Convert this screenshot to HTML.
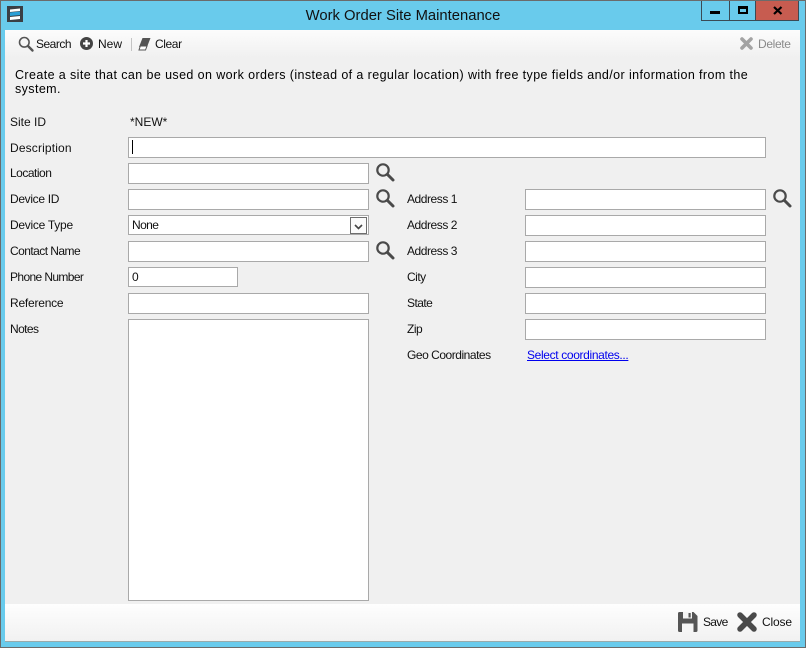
<!DOCTYPE html>
<html><head><meta charset="utf-8"><style>
html,body{margin:0;padding:0}
body{width:806px;height:648px;position:relative;overflow:hidden;background:#69cbec;font-family:"Liberation Sans",sans-serif;font-size:12px;color:#111}
#frame{position:absolute;left:0;top:0;width:804px;height:646px;border:1px solid #6b6b6b}
.a{position:absolute;white-space:nowrap;line-height:14px}
.i{position:absolute;box-sizing:border-box;background:#fff;border:1px solid #a9a9a9}
svg{position:absolute;overflow:visible}
</style></head><body>
<div id="frame"></div>
<div class="a" style="left:0;width:806px;top:8px;text-align:center;font-size:14.800px;line-height:16px;color:#111">Work Order Site Maintenance</div>
<div style="position:absolute;left:7px;top:6px;width:16px;height:16px;background:#3a3f45"></div>
<svg style="left:7px;top:6px" width="16" height="16"><path d="M3 3.500L13 2.500V5L3 6Z" fill="#fff"/><path d="M3 6.500L13 5.500V9L3 10Z" fill="#2a9fd6"/><path d="M3 11L13 10V13L3 14Z" fill="#fff"/></svg>
<div style="position:absolute;left:701px;top:1px;width:96px;height:19px;background:#c75c50;border:1px solid #3a4a55;border-top:0"></div>
<div style="position:absolute;left:702px;top:1px;width:53px;height:19px;background:#69cbec"></div>
<div style="position:absolute;left:729px;top:1px;width:1px;height:19px;background:#3a4a55"></div>
<div style="position:absolute;left:755px;top:1px;width:1px;height:19px;background:#3a4a55"></div>
<div style="position:absolute;left:710px;top:11px;width:10px;height:3px;background:#000"></div>
<div style="position:absolute;left:738px;top:6px;width:10px;height:8px;box-sizing:border-box;border:2px solid #000;border-top-width:3px"></div>
<svg style="left:773px;top:6px" width="10" height="9"><path d="M1 1L8.500 8M8.500 1L1 8" stroke="#000" stroke-width="2.200" fill="none"/></svg>

<div style="position:absolute;left:5px;top:30px;width:795px;height:611px;background:#f0f0f0;border-bottom:1px solid #9aa"></div>
<div style="position:absolute;left:5px;top:30px;width:795px;height:28px;background:linear-gradient(#fcfcfc,#f0f0f0)"></div>
<div style="position:absolute;left:5px;top:604px;width:795px;height:37px;background:linear-gradient(#fefefe,#f1f1f1)"></div>

<svg style="left:18px;top:36px" width="16" height="16"><circle cx="6.300" cy="6.300" r="4.800" fill="none" stroke="#555" stroke-width="1.600"/><path d="M10 10L14.500 14.500" stroke="#555" stroke-width="2.400" stroke-linecap="round"/></svg>
<div class="a" style="left:36px;top:37px;letter-spacing:-.5px">Search</div>
<svg style="left:80px;top:37px" width="14" height="14"><circle cx="6.500" cy="6.500" r="6.500" fill="#444"/><path d="M6.500 3V10M3 6.500H10" stroke="#fff" stroke-width="2.200"/></svg>
<div class="a" style="left:98px;top:37px">New</div>
<div style="position:absolute;left:131px;top:38px;width:1px;height:13px;background:#c4c4c4"></div>
<svg style="left:138px;top:37px" width="13" height="14"><path d="M4.500 1H12.500L9 10H1Z" fill="#555"/><path d="M2.300 9L1 13H7.500L9 9Z" fill="#fff" stroke="#555"/></svg>
<div class="a" style="left:155px;top:37px;letter-spacing:-.4px">Clear</div>
<svg style="left:740px;top:37px" width="13" height="13"><path d="M2 2L11 11M11 2L2 11" stroke="#a3a3a3" stroke-width="3.600" stroke-linecap="round"/></svg>
<div class="a" style="left:758px;top:37px;color:#8a8a8a;letter-spacing:-.35px">Delete</div>

<div class="a" style="left:15px;top:68px;font-size:12.500px;letter-spacing:.4px;color:#000">Create a site that can be used on work orders (instead of a regular location) with free type fields and/or information from the</div>
<div class="a" style="left:15px;top:82px;font-size:12.500px;letter-spacing:.4px;color:#000">system.</div>

<div class="a" style="left:10px;top:115px">Site ID</div>
<div class="a" style="left:130px;top:115px">*NEW*</div>
<div class="a" style="left:10px;top:141px;letter-spacing:.15px">Description</div>
<div class="a" style="left:10px;top:166px;letter-spacing:-.5px">Location</div>
<div class="a" style="left:10px;top:192px;letter-spacing:-.33px">Device ID</div>
<div class="a" style="left:10px;top:218px;letter-spacing:-.27px">Device Type</div>
<div class="a" style="left:10px;top:244px;letter-spacing:-.55px">Contact Name</div>
<div class="a" style="left:10px;top:270px;letter-spacing:-.62px">Phone Number</div>
<div class="a" style="left:10px;top:296px;letter-spacing:-.22px">Reference</div>
<div class="a" style="left:10px;top:322px;letter-spacing:-.6px">Notes</div>

<div class="i" style="left:128px;top:137px;width:638px;height:21px"></div>
<div style="position:absolute;left:132px;top:140px;width:1px;height:14px;background:#000"></div>
<div class="i" style="left:128px;top:163px;width:241px;height:21px"></div>
<div class="i" style="left:128px;top:189px;width:241px;height:21px"></div>
<div class="i" style="left:128px;top:215px;width:241px;height:20px"></div>
<div class="a" style="left:132px;top:218px;letter-spacing:-.6px">None</div>
<div style="position:absolute;left:350px;top:217px;width:17px;height:17px;box-sizing:border-box;border:1px solid #6e6e6e;background:#fbfbfb"></div>
<svg style="left:354px;top:224px" width="9" height="6"><path d="M1 1L4.500 4.500L8 1" fill="none" stroke="#444" stroke-width="1.600"/></svg>
<div class="i" style="left:128px;top:241px;width:241px;height:21px"></div>
<div class="i" style="left:128px;top:267px;width:110px;height:20px"></div>
<div class="a" style="left:132px;top:270px">0</div>
<div class="i" style="left:128px;top:293px;width:241px;height:21px"></div>
<div class="i" style="left:128px;top:319px;width:241px;height:282px"></div>

<svg style="left:376px;top:163px" width="19" height="19"><circle cx="7" cy="7" r="5.700" fill="none" stroke="#4a4a4a" stroke-width="2.200"/><path d="M11.500 11.500L17 17" stroke="#4a4a4a" stroke-width="3" stroke-linecap="round"/></svg>
<svg style="left:376px;top:189px" width="19" height="19"><circle cx="7" cy="7" r="5.700" fill="none" stroke="#4a4a4a" stroke-width="2.200"/><path d="M11.500 11.500L17 17" stroke="#4a4a4a" stroke-width="3" stroke-linecap="round"/></svg>
<svg style="left:376px;top:241px" width="19" height="19"><circle cx="7" cy="7" r="5.700" fill="none" stroke="#4a4a4a" stroke-width="2.200"/><path d="M11.500 11.500L17 17" stroke="#4a4a4a" stroke-width="3" stroke-linecap="round"/></svg>
<svg style="left:773px;top:189px" width="19" height="19"><circle cx="7" cy="7" r="5.700" fill="none" stroke="#4a4a4a" stroke-width="2.200"/><path d="M11.500 11.500L17 17" stroke="#4a4a4a" stroke-width="3" stroke-linecap="round"/></svg>

<div class="a" style="left:407px;top:192px;letter-spacing:-.45px">Address 1</div>
<div class="a" style="left:407px;top:218px;letter-spacing:-.45px">Address 2</div>
<div class="a" style="left:407px;top:244px;letter-spacing:-.45px">Address 3</div>
<div class="a" style="left:407px;top:270px;letter-spacing:-.5px">City</div>
<div class="a" style="left:407px;top:296px;letter-spacing:-.55px">State</div>
<div class="a" style="left:407px;top:322px;letter-spacing:-.5px">Zip</div>
<div class="a" style="left:407px;top:348px;letter-spacing:-.47px">Geo Coordinates</div>
<div class="a" style="left:527px;top:348px;color:#0000ee;text-decoration:underline;letter-spacing:-.35px">Select coordinates...</div>

<div class="i" style="left:525px;top:189px;width:241px;height:21px"></div>
<div class="i" style="left:525px;top:215px;width:241px;height:21px"></div>
<div class="i" style="left:525px;top:241px;width:241px;height:21px"></div>
<div class="i" style="left:525px;top:267px;width:241px;height:21px"></div>
<div class="i" style="left:525px;top:293px;width:241px;height:21px"></div>
<div class="i" style="left:525px;top:319px;width:241px;height:21px"></div>

<svg style="left:678px;top:612px" width="20" height="20"><path d="M0 1.500Q0 0 1.500 0H15.500L19.500 4V18.500Q19.500 20 18 20H1.500Q0 20 0 18.500Z" fill="#555"/><rect x="5" y="0" width="9" height="6.500" fill="#f5f5f5"/><rect x="10.500" y="1" width="2.200" height="4.500" fill="#555"/><rect x="4" y="11.500" width="11.500" height="8.500" fill="#f5f5f5"/></svg>
<div class="a" style="left:703px;top:615px;letter-spacing:-.7px">Save</div>
<svg style="left:737px;top:612px" width="20" height="20"><path d="M3 3L17 17M17 3L3 17" stroke="#4a4a4a" stroke-width="5.500" stroke-linecap="round"/></svg>
<div class="a" style="left:762px;top:615px;letter-spacing:-.15px">Close</div>
</body></html>
